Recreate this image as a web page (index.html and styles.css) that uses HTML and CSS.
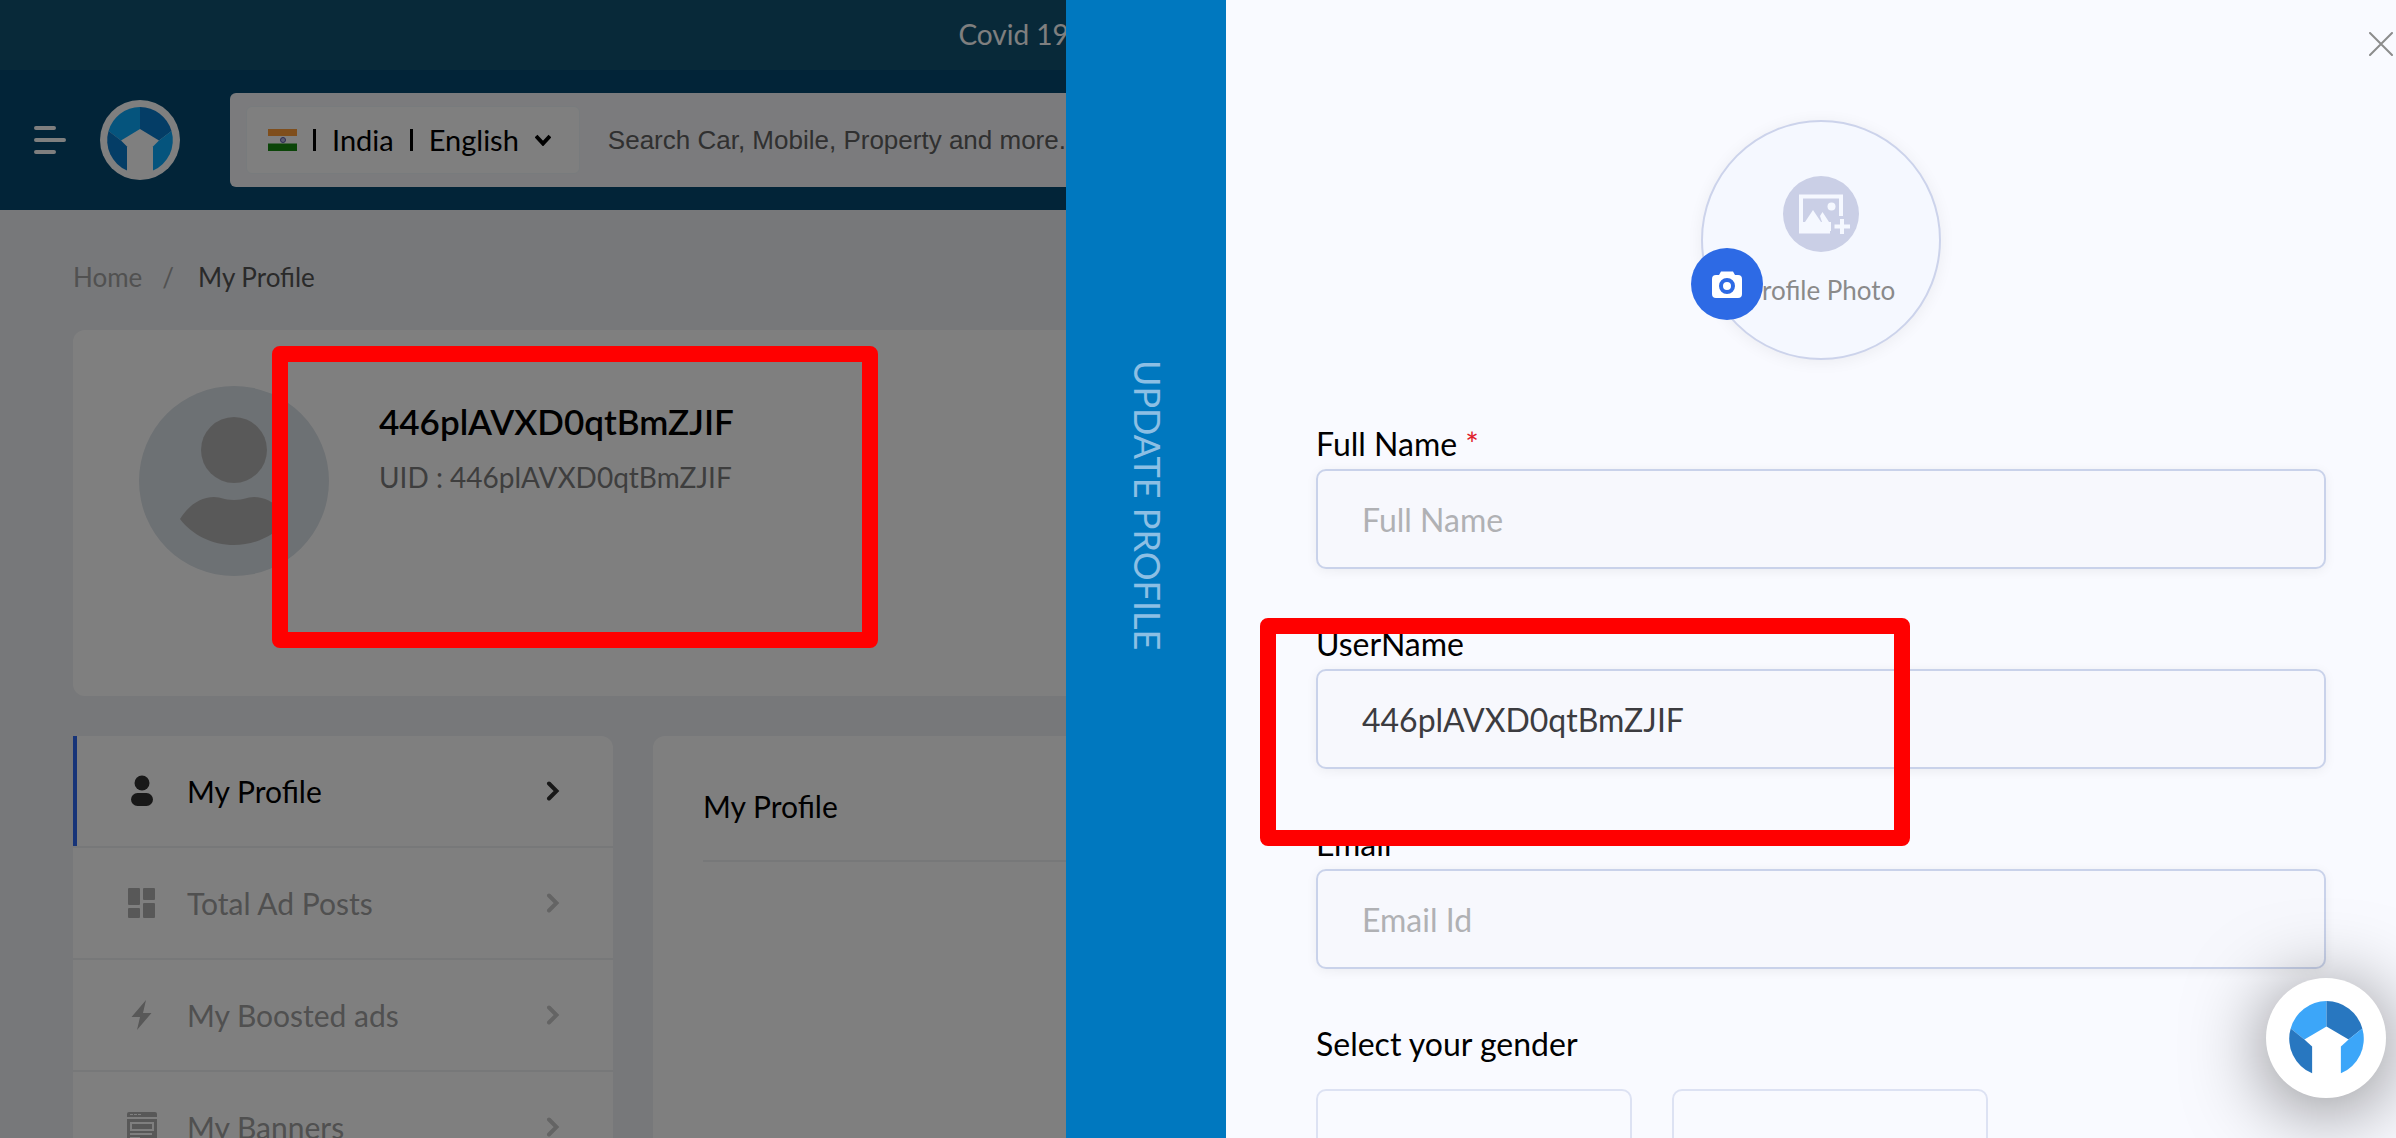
FILE: index.html
```
<!DOCTYPE html>
<html lang="en">
<head>
<meta charset="utf-8">
<title>My Profile</title>
<link rel="stylesheet" href="styles.css">
</head>
<body>
<svg class="defs" aria-hidden="true">
  <symbol id="chevron" viewBox="0 0 14 20"><path d="M3 2.500L10.500 10L3 17.500" fill="none" stroke="currentColor" stroke-width="4" stroke-linecap="round" stroke-linejoin="miter"/></symbol>
</svg>

<div class="page">
  <div class="notice">Covid 19</div>
  <header class="header">
    <button class="menu" type="button" aria-label="Menu">
      <svg viewBox="0 0 32 28" width="32" height="28" fill="none" stroke="#fff" stroke-width="4" stroke-linecap="round"><path d="M2 2H20M2 14H30M2 26H20"/></svg>
    </button>
    <a class="brand" href="#" aria-label="Home page">
      <svg viewBox="0 0 80 80" width="80" height="80">
        <circle cx="40" cy="40" r="40" fill="#fff"/>
        <path d="M40 7A33 33 0 0 0 8.500 31L21 40.500L40 29Z" fill="#0aa8fa"/>
        <path d="M40 7A33 33 0 0 1 71.500 31L59 40.500L40 29Z" fill="#087acc"/>
        <path d="M8.500 31A33 33 0 0 0 27 70.500V46.500L21 40.500Z" fill="#087acc"/>
        <path d="M71.500 31A33 33 0 0 1 53 70.500V46.500L59 40.500Z" fill="#0aa8fa"/>
      </svg>
    </a>
    <div class="search">
      <button class="locale" type="button">
        <svg viewBox="0 0 29 22" width="29" height="22">
          <path fill="#fff" d="M0 0h29v22H0z"/><path fill="#ff9c38" d="M0 0h29v7H0z"/><path fill="#168a10" d="M0 14.500h29V22H0z"/>
          <circle cx="15" cy="11" r="2.500" fill="#b8b8e0" stroke="#5858a8"/>
        </svg>
        <span class="bar"></span>
        <span>India</span>
        <span class="bar"></span>
        <span>English</span>
        <svg viewBox="0 0 16 12" width="16" height="12" fill="none" stroke="#000" stroke-width="4"><path d="M1 2L8 9.500L15 2"/></svg>
      </button>
      <input class="search-input" type="text" aria-label="Search" placeholder="Search Car, Mobile, Property and more...">
    </div>
  </header>

  <main class="main">
    <nav class="crumbs" aria-label="Breadcrumb">
      <a href="#">Home</a><span>/</span><span class="crumb-current">My Profile</span>
    </nav>
    <section class="card profile">
      <svg class="avatar" viewBox="0 0 190 190" width="190" height="190">
        <circle cx="95" cy="95" r="95" fill="#dbe2e8"/>
        <circle cx="95" cy="64" r="33" fill="#b3b3b3"/>
        <path d="M41 133C49 120 61 111 75 111C83 111 84 114 95 114C106 114 107 111 115 111C129 111 141 120 149 133C137 149 117 159 95 159C73 159 53 149 41 133Z" fill="#b3b3b3"/>
      </svg>
      <div class="profile-text">
        <h1>446plAVXD0qtBmZJIF</h1>
        <p>UID : 446plAVXD0qtBmZJIF</p>
      </div>
    </section>
    <div class="columns">
      <nav class="side" aria-label="Account">
        <a class="item active" href="#">
          <svg viewBox="0 0 32 32" width="32" height="32" fill="currentColor"><circle cx="16" cy="8" r="7.500"/><rect x="5" y="18" width="22" height="13" rx="6.500"/></svg>
          <span>My Profile</span>
          <svg class="chev" width="14" height="20"><use href="#chevron"/></svg>
        </a>
        <a class="item" href="#">
          <svg viewBox="0 0 32 32" width="32" height="32" fill="currentColor"><rect x="2" y="1" width="12" height="17" rx="1"/><rect x="17" y="1" width="12" height="12" rx="1"/><rect x="2" y="21" width="12" height="10" rx="1"/><rect x="17" y="16" width="12" height="15" rx="1"/></svg>
          <span>Total Ad Posts</span>
          <svg class="chev" width="14" height="20"><use href="#chevron"/></svg>
        </a>
        <a class="item" href="#">
          <svg viewBox="0 0 32 32" width="32" height="32" fill="currentColor"><path d="M20 1L5.500 18H14L11 31L25.500 14H17Z"/></svg>
          <span>My Boosted ads</span>
          <svg class="chev" width="14" height="20"><use href="#chevron"/></svg>
        </a>
        <a class="item" href="#">
          <svg viewBox="0 0 32 32" width="32" height="32"><path fill="currentColor" d="M3 1H29Q31 1 31 3V6H1V3Q1 1 3 1ZM1 8H31V32H1Z"/><path stroke="#fff" stroke-width="1" d="M4 3.500H7M8 3.500H11M12 3.500H15"/><path fill="none" stroke="#fff" stroke-width="2" d="M5 12H27V19H5ZM4 23H26M4 27H14"/></svg>
          <span>My Banners</span>
          <svg class="chev" width="14" height="20"><use href="#chevron"/></svg>
        </a>
      </nav>
      <section class="card detail">
        <h2>My Profile</h2>
      </section>
    </div>
  </main>
</div>

<div class="overlay"></div>

<aside class="drawer">
  <div class="drawer-tab"><span>UPDATE PROFILE</span></div>
  <form class="drawer-body">
    <button class="close" type="button" aria-label="Close">
      <svg viewBox="0 0 24 24" width="24" height="24" fill="none" stroke="#8c8c8c" stroke-width="2" stroke-linecap="round"><path d="M1 1L23 23M23 1L1 23"/></svg>
    </button>
    <div class="photo">
      <svg viewBox="0 0 76 76" width="76" height="76">
        <circle cx="38" cy="38" r="38" fill="#cacfe6"/>
        <path fill="none" stroke="#f5f8ff" stroke-width="4" d="M47 55.500H18V20.500H58V40"/>
        <path fill="#f5f8ff" d="M18 46H22L30 34L38 46H39L37 40L39.500 36L46 46H48V55H18Z"/>
        <circle cx="48.500" cy="30.500" r="4" fill="#f5f8ff"/>
        <path stroke="#f5f8ff" stroke-width="4" d="M59 43V58M51.500 50.500H67"/>
      </svg>
      <span>Profile Photo</span>
      <button class="camera" type="button" aria-label="Upload photo">
        <svg viewBox="0 0 30 27" width="30" height="27"><path fill="#fff" d="M4 4H7L9 0.500H21L23 4H26Q30 4 30 8V23Q30 27 26 27H4Q0 27 0 23V8Q0 4 4 4Z"/><circle cx="15" cy="15" r="6" fill="none" stroke="#2d6ae5" stroke-width="4"/></svg>
      </button>
    </div>
    <div class="field">
      <label for="full-name">Full Name <span class="required">*</span></label>
      <input id="full-name" type="text" placeholder="Full Name">
    </div>
    <div class="field">
      <label for="user-name">UserName</label>
      <input id="user-name" type="text" value="446plAVXD0qtBmZJIF">
    </div>
    <div class="field">
      <label for="email">Email</label>
      <input id="email" type="email" placeholder="Email Id">
    </div>
    <div class="field gender">
      <span class="legend">Select your gender</span>
      <div class="choices">
        <button type="button" aria-label="Male"></button>
        <button type="button" aria-label="Female"></button>
      </div>
    </div>
  </form>
</aside>

<button class="assist" type="button" aria-label="Assistant">
  <svg viewBox="0 0 224 224" width="75" height="75">
    <path d="M112 0A112 112 0 0 0 5 82L46 115L112 76Z" fill="#3ca6f9"/>
    <path d="M112 0A112 112 0 0 1 219 82L178 115L112 76Z" fill="#2877c0"/>
    <path d="M5 82A112 112 0 0 0 69 216V136L46 115Z" fill="#2877c0"/>
    <path d="M219 82A112 112 0 0 1 155 216V136L178 115Z" fill="#3ca6f9"/>
  </svg>
</button>

<div class="mark mark-profile"></div>
<div class="mark mark-username"></div>
</body>
</html>
```
FILE: styles.css
```
* { box-sizing: border-box; }

body {
  margin: 0;
  height: 100vh;
  overflow: hidden;
  background: #eff1f4;
  color: #000;
  font-family: Lato, "Liberation Sans", sans-serif;
  font-size: 30px;
  line-height: 40px;
}

h1, h2, p { margin: 0; font-weight: 400; }
a { color: inherit; text-decoration: none; }
button, input { font: inherit; color: inherit; }
button { padding: 0; border: 0; background: none; }
svg { display: block; flex: none; }
.defs { position: absolute; width: 0; height: 0; }

/* Page */
.page { height: 100vh; overflow: hidden; }
.notice {
  height: 70px;
  padding: 14px 0 0 40%;
  background: #105272;
  color: #fff;
  font-size: 28px;
}

.header {
  display: flex;
  align-items: center;
  height: 140px;
  padding-left: 34px;
  background: #044870;
}
.brand { margin: 0 50px 0 34px; }

.search {
  display: flex;
  align-items: center;
  flex: 1;
  height: 94px;
  padding: 0 16px;
  border-radius: 6px;
  background: #f6f7fa;
}
.locale {
  display: flex;
  align-items: center;
  gap: 16px;
  height: 68px;
  padding: 0 28px 0 21px;
  border: 1px solid #f1f6fa;
  border-radius: 6px;
  background: #fff;
  font-size: 29px;
}
.bar { width: 3px; height: 22px; background: #000; }
.search-input {
  flex: 1;
  padding: 0 0 0 28px;
  border: 0;
  background: none;
  font-family: "Liberation Sans", Arial, sans-serif;
  font-size: 26px;
  outline: 0;
}
.search-input::placeholder { color: #606060; }

.main { padding: 47px 73px 0; }
.crumbs {
  display: flex;
  gap: 20px;
  height: 73px;
  color: #a3a3a3;
  font-size: 26px;
}
.crumb-current { margin-left: 4px; color: #555; }

.card { border-radius: 12px; background: #fff; }
.profile {
  display: flex;
  gap: 50px;
  height: 366px;
  padding: 56px 66px;
}
.profile-text { padding-top: 15px; }
.profile-text h1 { margin-bottom: 16px; font-size: 35px; font-weight: 600; }
.profile-text p { color: #7c7c7c; font-size: 28px; }

.columns { display: flex; gap: 40px; margin-top: 40px; }
.side {
  width: 540px;
  overflow: hidden;
  border-radius: 0 12px 0 0;
  background: #fff;
}
.item {
  display: flex;
  align-items: center;
  gap: 29px;
  height: 112px;
  padding: 0 53px;
  border-bottom: 2px solid #eff0f2;
  color: #a0a0a0;
}
.item svg { color: #b0b0b0; }
.item .chev { margin-left: auto; color: #c8c8c8; }
.active { color: #000; box-shadow: inset 4px 0 #2e68f0; }
.item.active svg { color: #303030; }

.detail { flex: 1; height: 600px; padding: 50px; }
.detail h2 {
  padding-bottom: 34px;
  border-bottom: 2px solid #eff0f2;
  font-size: 30px;
}

.overlay { position: fixed; inset: 0; background: rgba(0, 0, 0, .5); }

/* Drawer */
.drawer {
  position: fixed;
  inset: 0 0 0 auto;
  display: flex;
  width: 1330px;
  max-width: 100%;
  overflow: hidden;
}
.drawer-tab {
  display: flex;
  justify-content: center;
  width: 160px;
  padding: 360px 0 0 4px;
  background: #0078bf;
  color: #8cbfe4;
  font-size: 36px;
}
.drawer-tab span { writing-mode: vertical-rl; white-space: nowrap; }
.drawer-body {
  position: relative;
  flex: 1;
  padding: 120px 70px 0 90px;
  background: #f9faff;
  font-size: 32px;
}
.close { position: absolute; top: 32px; right: 3px; }

.photo {
  position: relative;
  display: flex;
  flex-direction: column;
  align-items: center;
  gap: 18px;
  width: 240px;
  height: 240px;
  margin: 0 auto 64px;
  padding-top: 54px;
  border: 2px solid #ccd3eb;
  border-radius: 50%;
  background: #f5f8ff;
  box-shadow: 0 2px 16px rgba(0, 0, 0, .06);
  color: #8a8a8a;
  font-size: 26px;
}
.camera {
  position: absolute;
  top: 126px;
  left: -12px;
  display: grid;
  place-items: center;
  width: 72px;
  height: 72px;
  border-radius: 50%;
  background: #2d6ae5;
}

.field { display: flex; flex-direction: column; gap: 5px; margin-bottom: 55px; }
.required { color: #e0202a; }
.field input {
  width: 100%;
  height: 100px;
  padding: 0 44px;
  border: 2px solid #c9d2ea;
  border-radius: 10px;
  background: #f7f8fd;
  box-shadow: 0 2px 12px rgba(0, 0, 0, .06);
  color: #3c3c40;
  outline: 0;
}
.field input::placeholder { color: #b0b1b4; }
.gender { gap: 25px; }
.choices { display: flex; gap: 40px; }
.choices button {
  width: 316px;
  height: 100px;
  border: 2px solid #dde2f3;
  border-radius: 10px;
}

.assist {
  position: fixed;
  right: 10px;
  bottom: 40px;
  display: grid;
  place-items: center;
  width: 120px;
  height: 120px;
  border-radius: 50%;
  background: #fff;
  box-shadow: 0 10px 80px rgba(0, 0, 0, .5);
}

/* Highlight frames */
.mark { position: absolute; border: 16px solid #f00; border-radius: 8px; }
.mark-profile { top: 346px; left: 272px; width: 606px; height: 302px; }
.mark-username { top: 618px; left: 1260px; width: 650px; height: 228px; }
```
